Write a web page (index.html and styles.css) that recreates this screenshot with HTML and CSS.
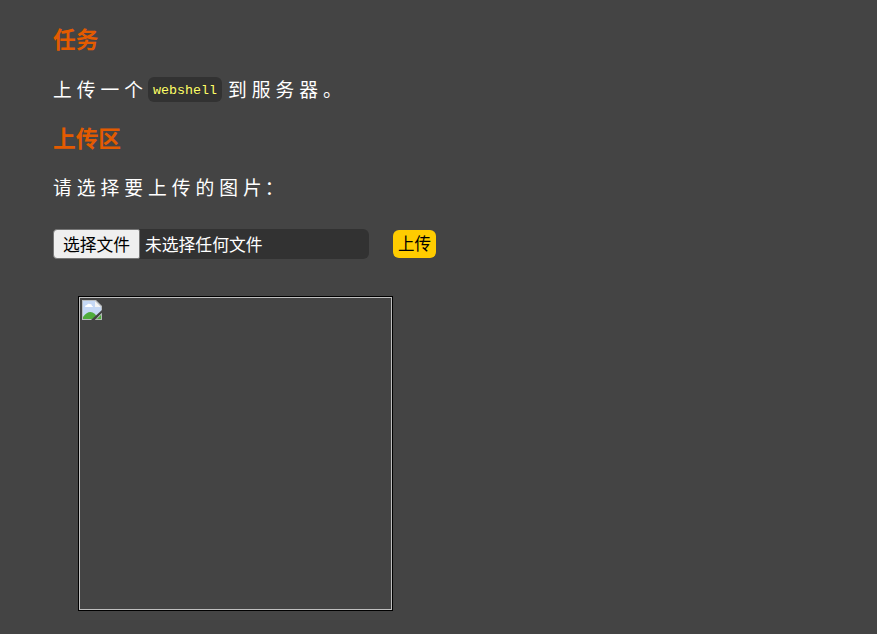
FILE: index.html
```html
<!DOCTYPE html>
<html lang="zh-CN">
<head>
<meta charset="utf-8">
<title>上传</title>
<link rel="stylesheet" href="styles.css">
</head>
<body>
<main class="page">
  <h3 class="title">任务</h3>
  <p class="text task">上传一个<code class="code">webshell</code><span>到服务器。</span></p>
  <h3 class="title">上传区</h3>
  <p class="text prompt">请选择要上传的图片<span class="colon">：</span></p>
  <form class="upload">
    <div class="file">
      <button class="choose" type="button">选择文件</button>
      <span class="filename">未选择任何文件</span>
    </div>
    <button class="submit" type="button">上传</button>
  </form>
  <div class="preview">
    <svg class="broken" viewBox="0 0 20 20" width="20" height="20">
      <path d="M0 0H14L20 6V20H0Z" fill="#b9bdc1"/>
      <path d="M1 1H13V7H19V19H1Z" fill="#c5d8f5"/>
      <path d="M3 7q0-2 2-2q1-2 3-1q2 0 2 2q1 0 1 1Z" fill="#fff"/>
      <path d="M1 19V17Q7 9 13 14L16 19Z" fill="#4fac3c"/>
      <path d="M13 1L19 7H13Z" fill="#f4f4f4"/>
      <path d="M20 10L9 20H13L20 13Z" fill="#444"/>
      <path d="M20 13L13 20H20Z" fill="#aebbaf"/>
      <path d="M15 19L19 15V19Z" fill="#4fac3c"/>
    </svg>
  </div>
</main>
</body>
</html>
```
FILE: styles.css
```css
* {
  box-sizing: border-box;
}

body {
  margin: 0;
  background: #444;
  color: #fff;
  font-family: "Noto Sans CJK SC", sans-serif;
}

.page {
  padding: 25px 53px 0;
}

.title {
  margin: 0;
  height: 30px;
  line-height: 27px;
  font-size: 22.7px;
  font-weight: 700;
  color: #e35b00;
}

.text {
  display: flex;
  align-items: center;
  margin: 0;
  font-size: 18.75px;
  font-weight: 400;
  letter-spacing: 5px;
  line-height: 26px;
  white-space: nowrap;
}

.task {
  height: 26px;
  margin: 21px 0 22px;
  line-height: 24px;
}

.prompt {
  height: 26px;
  margin: 20px 0 0;
}

.colon {
  margin-left: -2px;
}

.code {
  height: 25px;
  width: 74px;
  margin-right: 6px;
  padding-left: 5px;
  border-radius: 6px;
  background: #323232;
  color: #ff6;
  font: 13.33px/27px "Liberation Mono", monospace;
  letter-spacing: 0;
}

.upload {
  display: flex;
  align-items: center;
  gap: 24px;
  height: 30px;
  margin: 29px 0 37px;
}

.file {
  display: flex;
  align-items: center;
  width: 316px;
  height: 30px;
  border-radius: 6px;
  background: #323232;
  font-size: 16.8px;
}

.choose {
  width: 87px;
  height: 30px;
  padding: 0;
  border: 1px solid #767676;
  border-radius: 4px 2px 2px 4px;
  background: #efefef;
  color: #000;
  font: 16.8px/26px "Noto Sans CJK SC", sans-serif;
}

.filename {
  margin-left: 5px;
  line-height: 30px;
}

.submit {
  width: 43px;
  height: 28px;
  padding: 0 0 2px;
  border: 0;
  border-radius: 6px;
  background: #fc0;
  color: #000;
  font: 16.5px/26px "Noto Sans CJK SC", sans-serif;
}

.preview {
  width: 315px;
  height: 315px;
  margin-left: 25px;
  padding: 2px;
  border: 1px solid #000;
  box-shadow: inset 0 0 0 1px #c0c0c0;
}

.broken {
  display: block;
  margin: 1px;
}
```
